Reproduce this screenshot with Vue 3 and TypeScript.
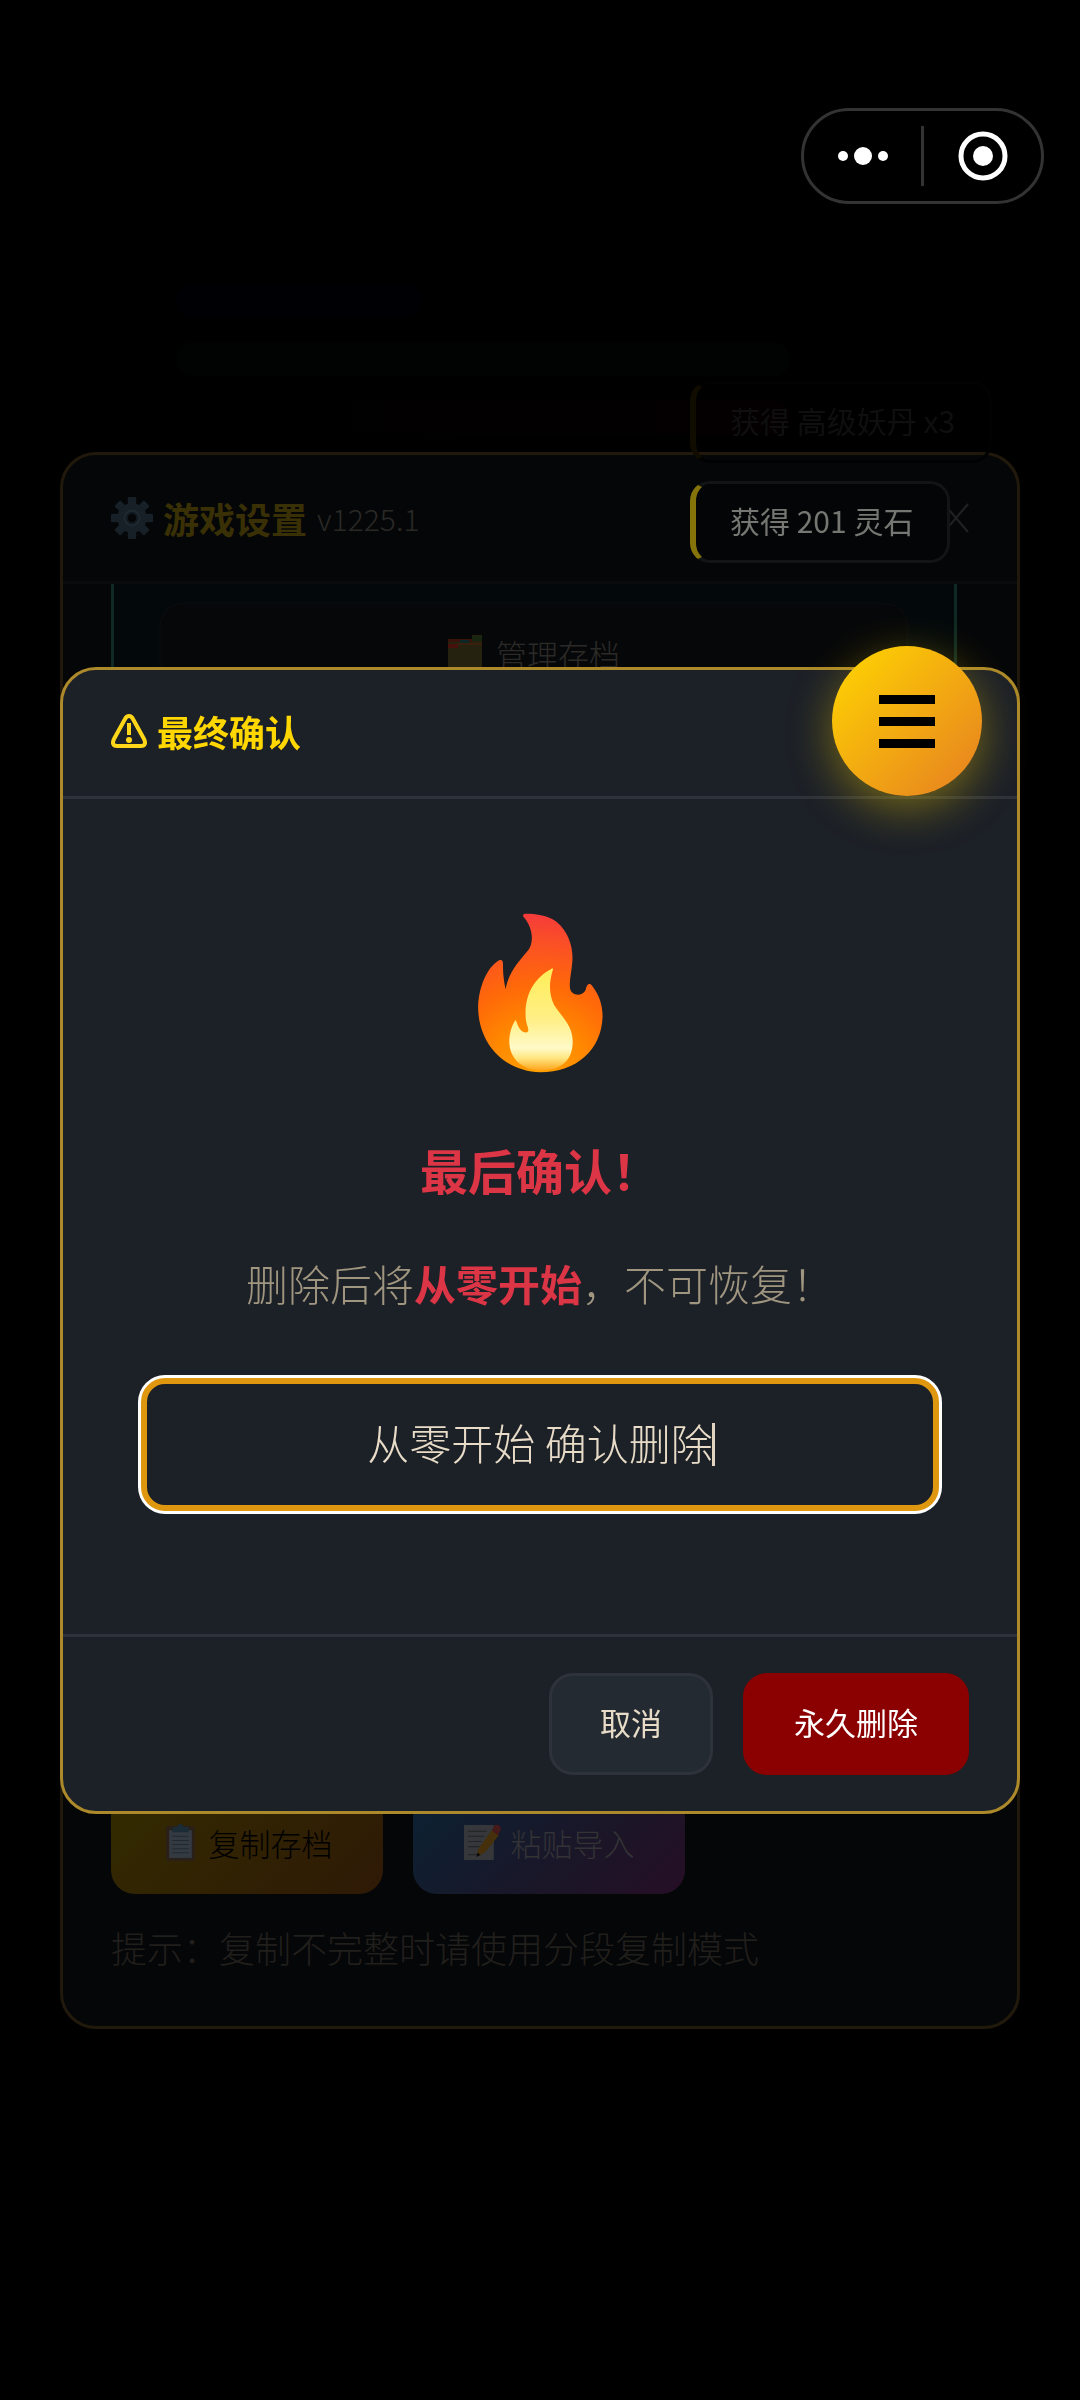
<script setup lang="ts">
import { ref } from 'vue'

const phrase = ref<string>('从零开始 确认删除')
const bars: string[] = ['cultivation', 'vitality', 'health']
const menuLines: number[] = [1, 2, 3]
</script>

<template>
  <div class="screen">
    <div class="stats" aria-hidden="true">
      <div v-for="bar in bars" :key="bar" class="bar" :class="bar"></div>
    </div>

    <div class="layer">
      <section class="modal settings">
        <header class="modal-head">
          <h2 class="title">
            <svg class="gear" viewBox="0 0 40 40">
              <g fill="#172027">
                <rect x="16" y="0" width="8" height="40" rx="1" />
                <rect x="16" y="0" width="8" height="40" rx="1" transform="rotate(45 20 20)" />
                <rect x="16" y="0" width="8" height="40" rx="1" transform="rotate(90 20 20)" />
                <rect x="16" y="0" width="8" height="40" rx="1" transform="rotate(135 20 20)" />
                <circle cx="20" cy="20" r="14" />
              </g>
              <circle cx="20" cy="20" r="7" fill="#121a20" stroke="#1d2830" stroke-width="2" />
              <circle cx="20" cy="20" r="4" fill="#050608" />
            </svg>
            <span>游戏设置</span>
            <small class="version">v1225.1</small>
          </h2>
          <button class="close" type="button" aria-label="关闭">
            <svg viewBox="0 0 26 30"><path d="M1 1 25 29M25 1 1 29" stroke="#202123" stroke-width="2" fill="none" /></svg>
          </button>
        </header>
        <div class="settings-body">
          <div class="card">
            <button class="manage" type="button">
              <svg class="folder" viewBox="0 0 34 36">
                <path d="M0 4h24V0h10v36H0z" fill="#252310" />
                <path d="M0 4h24v3H0z" fill="#3a120c" />
                <path d="M12 5h9v3h-9z" fill="#0b2826" />
                <path d="M24 1h10v5H24z" fill="#182511" />
                <path d="M0 9h10v4H0z" fill="#48100a" />
                <path d="M10 8h24v2H10z" fill="#3a200c" />
              </svg>
              <span>管理存档</span>
            </button>
          </div>
          <div class="transfer">
            <div class="transfer-row">
              <button class="transfer-button copy" type="button">
                <svg class="glyph" viewBox="0 0 36 36">
                  <rect x="4" y="2" width="28" height="34" rx="2" fill="#2b2018" />
                  <rect x="7" y="6" width="22" height="27" fill="#343a42" />
                  <path d="M10 12h16M10 16h16M10 20h16M10 24h16M10 28h16" stroke="#23282e" stroke-width="1" />
                  <path d="M10 3h5c0-4 6-4 6 0h5v5H10z" fill="#1b2c36" />
                </svg>
                <span>复制存档</span>
              </button>
              <button class="transfer-button paste" type="button">
                <svg class="glyph" viewBox="0 0 36 36">
                  <path d="M0 1h29v34H0z" fill="#35373a" />
                  <path d="M4 7h18M4 12h16M4 17h13M4 22h11M4 30h8" stroke="#202327" stroke-width="1" />
                  <path d="m12 32 2-8L27 6l7 5-14 17z" fill="#45300b" />
                  <path d="m27 6 3-5c3-1 6 1 6 4l-3 6z" fill="#461a1a" />
                  <path d="m12 32 1-4 3 2z" fill="#090909" />
                </svg>
                <span>粘贴导入</span>
              </button>
            </div>
            <p class="hint">提示：复制不完整时请使用分段复制模式</p>
          </div>
        </div>
      </section>
    </div>

    <div class="toasts">
      <div class="toast fading">获得 高级妖丹 x3</div>
      <div class="toast">获得 201 灵石</div>
    </div>

    <div class="layer">
      <section class="modal confirm" role="dialog" aria-labelledby="confirm-title">
        <header class="modal-head">
          <h2 id="confirm-title" class="title bright">
            <svg class="warning" viewBox="0 0 36 34">
              <path d="M18 2c2 0 3 1 4 3l11 20c2 4 1 7-3 7H6c-4 0-5-3-3-7L14 5c1-2 2-3 4-3z" fill="none" stroke="#ffd618" stroke-width="4" />
              <path d="M18 9v12" stroke="#ffd618" stroke-width="4" />
              <circle cx="18" cy="26" r="3" fill="#ffd618" />
            </svg>
            <span>最终确认</span>
          </h2>
        </header>
        <div class="confirm-body">
          <svg class="flame" viewBox="290 98 382 482">
            <defs>
              <radialGradient id="flame-outer" gradientUnits="userSpaceOnUse" cx="475" cy="580" r="480">
                <stop offset="0" stop-color="#ffa000" />
                <stop offset=".3" stop-color="#ff8a00" />
                <stop offset=".55" stop-color="#ff6a08" />
                <stop offset=".8" stop-color="#fb5223" />
                <stop offset="1" stop-color="#f53b3b" />
              </radialGradient>
              <linearGradient id="flame-inner" x1="0" y1="0" x2="0" y2="1">
                <stop offset="0" stop-color="#ffee58" />
                <stop offset=".5" stop-color="#ffef86" />
                <stop offset=".78" stop-color="#fffac8" />
                <stop offset=".88" stop-color="#ffe680" />
                <stop offset="1" stop-color="#ffa51c" />
              </linearGradient>
            </defs>
            <path fill="url(#flame-outer)" d="M434 100C470 100 505 105 530 125C565 155 580 200 577 243C575 275 567 298 570 325C573 349 608 350 617 330C619 316 627 305 637 318C658 345 668 375 668 410C665 510 590 578 480 578C370 575 293 490 293 380C295 320 320 262 355 241C370 235 368 250 368 262C368 285 372 310 376 328C383 280 415 245 440 215C464 190 458 140 430 110C427 104 429 101 434 100z" />
            <path fill="url(#flame-inner)" d="M519 267C505 310 507 345 522 375C542 408 578 435 578 485C578 545 540 572 483 572C425 572 387 535 387 485C387 460 395 435 406 420C412 430 415 455 437 458C452 455 440 440 437 420C430 350 460 295 513 267C516 265 518 265 519 267z" />
          </svg>
          <h3 class="warning-title">最后确认！</h3>
          <p class="warning-text">删除后将<strong>从零开始</strong>，不可恢复！</p>
          <div class="field">
            <input v-model="phrase" type="text" aria-label="确认删除" />
            <span class="caret"></span>
          </div>
        </div>
        <footer class="actions">
          <button class="action" type="button">取消</button>
          <button class="action danger" type="button">永久删除</button>
        </footer>
      </section>
    </div>

    <button class="menu" type="button" aria-label="菜单">
      <span v-for="line in menuLines" :key="line" class="menu-line"></span>
    </button>

    <div class="capsule">
      <button class="capsule-button" type="button" aria-label="更多">
        <svg viewBox="0 0 50 50" fill="#fff"><circle cx="5" cy="25" r="5" /><circle cx="25" cy="25" r="9" /><circle cx="45" cy="25" r="5" /></svg>
      </button>
      <span class="capsule-divider"></span>
      <button class="capsule-button" type="button" aria-label="退出">
        <svg viewBox="0 0 50 50"><circle cx="25" cy="25" r="22" fill="none" stroke="#fff" stroke-width="5" /><circle cx="25" cy="25" r="10" fill="#fff" /></svg>
      </button>
    </div>
  </div>
</template>

<style>
body {
  margin: 0;
  background: #000;
}
</style>

<style scoped>
.screen {
  position: relative;
  min-height: 100vh;
  overflow: hidden;
  background: #000;
  font-family: "Noto Sans CJK SC", sans-serif;
  font-weight: 300;
}
.screen * {
  box-sizing: border-box;
}
button,
input {
  margin: 0;
  padding: 0;
  border: 0;
  background: none;
  font: inherit;
  color: inherit;
}
h2,
h3,
p {
  margin: 0;
}
svg {
  display: block;
  flex: none;
}
.stats {
  display: flex;
  flex-direction: column;
  gap: 24px;
  padding: 284px 290px 0 176px;
}
.bar {
  height: 34px;
  border-radius: 17px;
}
.cultivation {
  width: 40%;
  background: #000004;
}
.vitality {
  background: #000302;
}
.health {
  background: linear-gradient(90deg, #000, #040001);
}
.layer {
  position: fixed;
  inset: 0;
  display: flex;
  align-items: center;
  padding: 81px 60px 0;
}
.modal {
  display: flex;
  flex: 1;
  flex-direction: column;
  overflow: hidden;
  border: 3px solid;
  border-radius: 36px;
}
.modal-head {
  display: flex;
  align-items: center;
  justify-content: space-between;
  height: 129px;
  padding: 0 48px;
  border-bottom: 3px solid;
}
.title {
  display: flex;
  align-items: center;
  gap: 10px;
  font-size: 36px;
  line-height: 48px;
  font-weight: 700;
  color: #3a3005;
}
.title.bright {
  padding-bottom: 4px;
  color: #ffd700;
}
.settings {
  height: 68%;
  border-color: #21190b;
  background: #050608;
}
.settings .modal-head {
  border-color: #090b0d;
}
.gear {
  width: 42px;
  height: 42px;
}
.version {
  font-size: 30px;
  font-weight: 300;
  color: #2a2926;
}
.close {
  width: 26px;
  height: 30px;
}
.settings-body {
  display: flex;
  flex: 1;
  flex-direction: column;
  justify-content: space-between;
  padding: 0 60px 52px 48px;
}
.card {
  height: 240px;
  padding: 18px 45px;
  border: solid #0f2a22;
  border-width: 0 3px;
  background: #03080b;
}
.manage {
  display: flex;
  align-items: center;
  justify-content: center;
  gap: 14px;
  width: 100%;
  height: 102px;
  border: 3px solid #07090b;
  border-radius: 24px;
  background: #060709;
  color: #2c2a27;
  font-size: 31px;
}
.folder {
  width: 34px;
  height: 36px;
}
.transfer-row {
  display: flex;
  gap: 30px;
}
.transfer-button {
  display: flex;
  align-items: center;
  justify-content: center;
  gap: 10px;
  width: 272px;
  height: 102px;
  border-radius: 24px;
  font-size: 31px;
}
.glyph {
  width: 37px;
  height: 37px;
}
.copy {
  background: linear-gradient(135deg, #332b00, #2e1906);
  color: #000;
}
.paste {
  background: linear-gradient(135deg, #0b2233, #1a1628 60%, #260e26);
  color: #333235;
}
.hint {
  margin-top: 26px;
  font-size: 36px;
  line-height: 54px;
  color: #211f1c;
}
.toasts {
  position: fixed;
  top: 381px;
  left: 690px;
  display: flex;
  flex-direction: column;
  align-items: flex-start;
  gap: 18px;
}
.toast {
  padding: 15px 34px 19px;
  border: 3px solid #121416;
  border-left: 6px solid #85740a;
  border-radius: 20px;
  background: #040506;
  font-size: 30px;
  line-height: 42px;
  font-weight: 400;
  color: #767672;
  white-space: nowrap;
}
.toast.fading {
  border-color: #020202;
  border-left-color: #100d00;
  background: none;
  color: #0f0f0f;
}
.confirm {
  border-color: #ac892a;
  background: #1c2027;
}
.confirm .modal-head {
  border-color: #2e323a;
}
.warning {
  width: 36px;
  height: 34px;
}
.confirm-body {
  display: flex;
  flex-direction: column;
  align-items: center;
  padding: 114px 78px 123px;
}
.flame {
  width: 127px;
  height: 160px;
}
.warning-title {
  margin-top: 60px;
  font-size: 48px;
  line-height: 72px;
  font-weight: 700;
  color: #dc3545;
}
.warning-text {
  margin-top: 46px;
  font-size: 42px;
  line-height: 64px;
  color: #a09680;
}
.warning-text strong {
  font-weight: 700;
  color: #dc3545;
}
.field {
  position: relative;
  width: 100%;
  margin-top: 63px;
}
.field input {
  display: block;
  width: 100%;
  height: 133px;
  padding-bottom: 6px;
  border: 6px solid #de970f;
  border-radius: 24px;
  outline: none;
  box-shadow: 0 0 0 3px #fff;
  background: #1c2027;
  font-size: 42px;
  text-align: center;
  color: #e8dcc8;
  caret-color: transparent;
}
.caret {
  position: absolute;
  top: 45px;
  left: calc(50% + 172px);
  width: 3px;
  height: 43px;
  background: #e0d4c0;
}
.actions {
  display: flex;
  justify-content: flex-end;
  gap: 30px;
  padding: 36px 48px;
  border-top: 3px solid #2e323a;
}
.action {
  height: 102px;
  padding: 0 48px 6px;
  border: 3px solid #2e323a;
  border-radius: 24px;
  background: #242a31;
  font-size: 31px;
  font-weight: 400;
  color: #e8dcc8;
}
.action.danger {
  border-color: #8b0000;
  background: #8b0000;
  color: #fff;
}
.menu {
  position: fixed;
  top: 646px;
  right: 98px;
  display: flex;
  flex-direction: column;
  align-items: center;
  justify-content: center;
  gap: 13px;
  width: 150px;
  height: 150px;
  border-radius: 50%;
  background: linear-gradient(135deg, #ffd700, #e67e22);
  box-shadow: 0 12px 45px rgba(255, 215, 0, 0.4);
}
.menu-line {
  width: 56px;
  height: 9px;
  background: #000;
}
.capsule {
  position: fixed;
  top: 108px;
  right: 36px;
  display: flex;
  align-items: center;
  width: 243px;
  height: 96px;
  border: 3px solid #333;
  border-radius: 48px;
  background: #000;
}
.capsule-button {
  display: flex;
  flex: 1;
  align-items: center;
  justify-content: center;
  height: 100%;
}
.capsule-button svg {
  width: 50px;
  height: 50px;
}
.capsule-divider {
  width: 3px;
  height: 60px;
  background: #333;
}
</style>
